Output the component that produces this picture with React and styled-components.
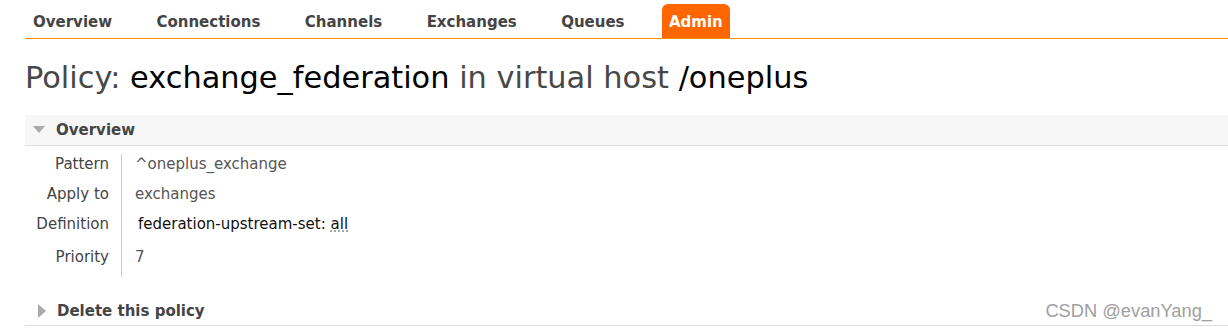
import React from "react";
import styled, { createGlobalStyle } from "styled-components";

const GlobalStyle = createGlobalStyle`
  html, body {
    margin: 0;
    padding: 0;
    background: #fff;
  }
  body {
    font-family: "DejaVu Sans", Verdana, sans-serif;
    color: #484848;
  }
`;

const tabs = ["Overview", "Connections", "Channels", "Exchanges", "Queues", "Admin"];

const rows = [
  { label: "Pattern", value: "^oneplus_exchange" },
  { label: "Apply to", value: "exchanges" },
  { label: "Definition", def: true },
  { label: "Priority", value: "7" },
];

const App = () => {
  return (
    <Page>
      <GlobalStyle />
      <Nav>
        {tabs.map((t) => (
          <Tab key={t} active={t === "Admin"}>
            {t}
          </Tab>
        ))}
      </Nav>
      <Title>
        Policy: <Strong>exchange_federation</Strong> in virtual host{" "}
        <Strong>/oneplus</Strong>
      </Title>

      <SectionHeader>
        <Arrow viewBox="0 0 12 8">
          <polygon points="0,0 12,0 6,7" fill="#aaa" />
        </Arrow>
        Overview
      </SectionHeader>
      <Table>
        {rows.map((r) => (
          <Row key={r.label} tall={r.def}>
            <Label>{r.label}</Label>
            <Value dark={r.def}>
              {r.def ? (
                <>
                  federation-upstream-set: <Abbr>all</Abbr>
                </>
              ) : (
                r.value
              )}
            </Value>
          </Row>
        ))}
      </Table>

      <CollapsedHeader>
        <Arrow viewBox="0 0 8 14" small>
          <polygon points="0,0 8,7 0,14" fill="#aaa" />
        </Arrow>
        Delete this policy
        <Watermark>CSDN @evanYang_</Watermark>
      </CollapsedHeader>
    </Page>
  );
};

const Page = styled.div`
  padding: 4px 0 0 25px;
  width: 1203px;
`;

const Nav = styled.div`
  display: flex;
  height: 34px;
  border-bottom: 1px solid #ff8c00;
  padding-left: 1px;
`;

const Tab = styled.div`
  font-size: 15px;
  font-weight: bold;
  line-height: 32px;
  padding: 2px 7px 0;
  margin-right: 30.4px;
  color: ${(p) => (p.active ? "#fff" : "#444")};
  background: ${(p) => (p.active ? "#ff6600" : "transparent")};
  border-radius: 6px 6px 0 0;
`;

const Title = styled.h1`
  font-size: 30.4px;
  font-weight: normal;
  color: #484848;
  margin: 21px 0 0 0;
  line-height: 36px;
  height: 44px;
`;

const Strong = styled.span`
  color: #000;
`;

const SectionHeader = styled.div`
  display: flex;
  align-items: center;
  height: 30px;
  margin-top: 11px;
  background: #f7f7f7;
  border-bottom: 1px solid #ddd;
  font-size: 15px;
  font-weight: bold;
  color: #444;
  padding-left: 7px;
`;

const Arrow = styled.svg`
  width: ${(p) => (p.small ? "8px" : "12px")};
  height: ${(p) => (p.small ? "14px" : "8px")};
  margin-right: 11px;
  margin-left: ${(p) => (p.small ? "6px" : "1px")};
`;

const Table = styled.div`
  display: grid;
  grid-template-columns: 97px 1fr;
  padding-top: 8px;
  width: 600px;
`;

const Row = styled.div`
  display: contents;
  & > div {
    height: ${(p) => (p.tall ? "33px" : "30px")};
  }
`;

const Label = styled.div`
  font-size: 15px;
  color: #444;
  text-align: right;
  padding-right: 12px;
  line-height: 20px;
  border-right: 1px solid #ccc;
`;

const Value = styled.div`
  font-size: 15px;
  color: ${(p) => (p.dark ? "#111" : "#555")};
  padding-left: ${(p) => (p.dark ? "16px" : "13px")};
  line-height: 20px;
`;

const Abbr = styled.abbr`
  text-decoration: underline dotted #888;
  text-underline-offset: 2px;
`;

const CollapsedHeader = styled.div`
  position: relative;
  display: flex;
  align-items: center;
  height: 28px;
  margin-top: 20px;
  border-bottom: 1px solid #ddd;
  font-size: 15px;
  font-weight: bold;
  color: #444;
  padding-left: 7px;
`;

const Watermark = styled.span`
  position: absolute;
  right: 16px;
  top: 3px;
  font-family: "Liberation Sans", Arial, sans-serif;
  font-weight: normal;
  font-size: 18.3px;
  color: #a0a0a0;
`;

export default App;
